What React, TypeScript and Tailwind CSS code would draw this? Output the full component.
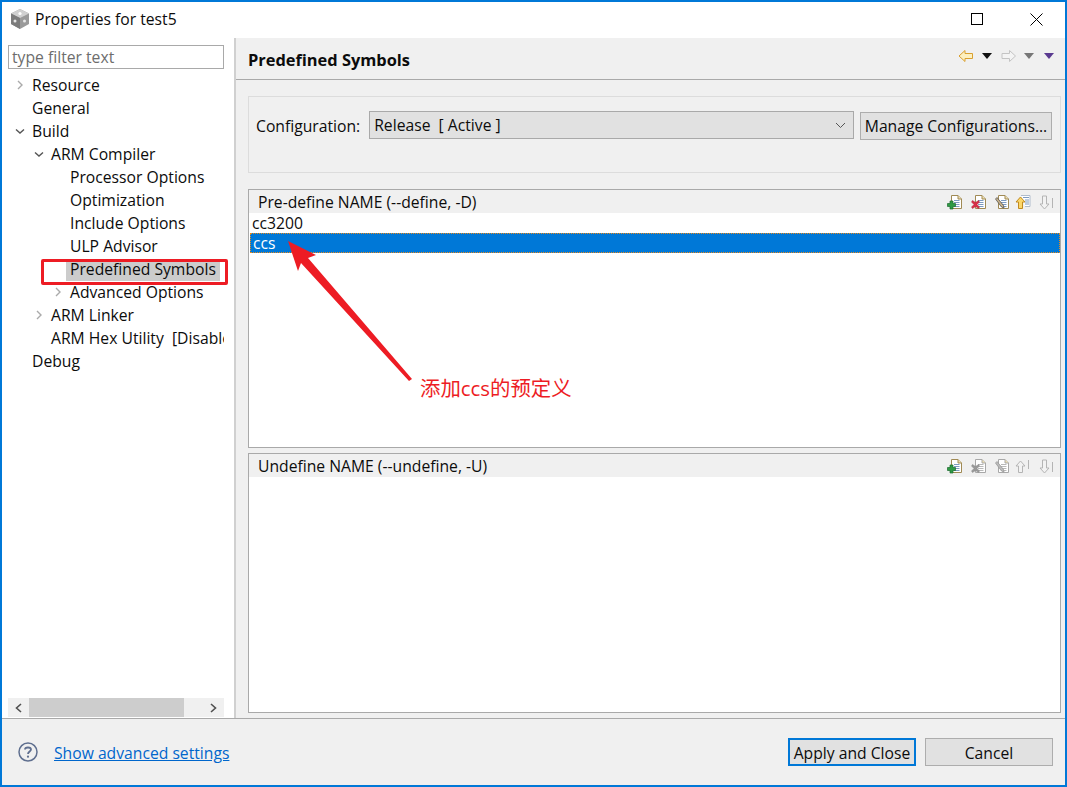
import React from 'react';

const FONT = { fontFamily: '"Open Sans", "Noto Sans", "Noto Sans CJK SC", sans-serif' };

type TreeItem = { label: string; level: number; arrow?: 'open' | 'closed'; selected?: boolean };

const treeItems: TreeItem[] = [
  { label: 'Resource', level: 0, arrow: 'closed' },
  { label: 'General', level: 0 },
  { label: 'Build', level: 0, arrow: 'open' },
  { label: 'ARM Compiler', level: 1, arrow: 'open' },
  { label: 'Processor Options', level: 2 },
  { label: 'Optimization', level: 2 },
  { label: 'Include Options', level: 2 },
  { label: 'ULP Advisor', level: 2 },
  { label: 'Predefined Symbols', level: 2, selected: true },
  { label: 'Advanced Options', level: 2, arrow: 'closed' },
  { label: 'ARM Linker', level: 1, arrow: 'closed' },
  { label: 'ARM Hex Utility  [Disabled]', level: 1 },
  { label: 'Debug', level: 0 },
];

function TreeArrow({ kind }: { kind: 'open' | 'closed' }) {
  return (
    <svg width="10" height="10" viewBox="0 0 10 10" fill="none" strokeWidth="1.4">
      {kind === 'open' ? (
        <path d="M1 3.5 L5 7 L9 3.5" stroke="#555" />
      ) : (
        <path d="M3 1 L7 5 L3 9" stroke="#aaa" />
      )}
    </svg>
  );
}

function Tree() {
  return (
    <div className="flex flex-col overflow-hidden">
      {treeItems.map((item) => (
        <div key={item.label} className={`flex h-[23px] items-center ${item.level === 0 ? 'pl-[26px]' : item.level === 1 ? 'pl-[45px]' : 'pl-[64px]'} relative whitespace-pre`}>
          {item.arrow && (
            <span className={`absolute top-[6px] ${item.level === 0 ? 'left-[13px]' : item.level === 1 ? 'left-[32px]' : 'left-[51px]'}`}>
              <TreeArrow kind={item.arrow} />
            </span>
          )}
          <span className={`px-[4px] pb-[2px] leading-[20px] ${item.selected ? 'bg-[#cccccc]' : ''}`}>{item.label}</span>
        </div>
      ))}
    </div>
  );
}

function HeaderArrow({ dir, active }: { dir: 'left' | 'right'; active: boolean }) {
  const d = dir === 'left' ? 'M1 7 L7 1.5 V4.5 H14.5 V9.5 H7 V12.5 Z' : 'M14.5 7 L8.5 1.5 V4.5 H1 V9.5 H8.5 V12.5 Z';
  return (
    <svg width="16" height="14" viewBox="0 0 16 14">
      <path d={d} fill={active ? '#fdf0c0' : '#f4f4f4'} stroke={active ? '#d9a030' : '#c4c4c4'} />
    </svg>
  );
}

function Caret({ color }: { color: string }) {
  return (
    <svg width="10" height="6" viewBox="0 0 10 6">
      <path d="M0 0 H10 L5 6 Z" fill={color} />
    </svg>
  );
}

function DocIcon({ kind, enabled }: { kind: 'add' | 'del' | 'edit'; enabled: boolean }) {
  const border = enabled ? '#a08a55' : '#a8a8a8';
  const line = enabled ? '#7d9ac0' : '#b8b8b8';
  return (
    <svg width="16" height="16" viewBox="0 0 16 16">
      <path d="M4.5 1.5 H11 L14.5 5 V14.5 H4.5 Z" fill="#fff" stroke={border} />
      <path d="M11 1.5 V5 H14.5" fill="#f0e0b0" stroke={border} />
      <path d="M7 6.5 H12.5 M7 8.5 H12.5 M7 10.5 H12.5 M7 12.5 H12.5" stroke={line} />
      {kind === 'add' && (
        <path d="M3 7 H6 V9.5 H8.5 V12.5 H6 V15 H3 V12.5 H0.5 V9.5 H3 Z" fill={enabled ? '#2f9a45' : '#999'} stroke={enabled ? '#1a6a2c' : '#888'} strokeWidth="0.7" />
      )}
      {kind === 'del' && (
        <path d="M1.5 6.5 L4.5 8.5 L7.5 6.5 L8.5 8 L6 10.5 L8.5 13 L7.5 14.5 L4.5 12.5 L1.5 14.5 L0.5 13 L3 10.5 L0.5 8 Z" fill={enabled ? '#d83048' : '#999'} stroke={enabled ? '#b02038' : '#888'} strokeWidth="0.5" />
      )}
      {kind === 'edit' && (
        <path d="M1.5 5 L3 3.5 L9.5 11.5 L10 14 L7.5 13 Z" fill={enabled ? '#c9b28a' : '#bbb'} stroke={enabled ? '#555' : '#999'} strokeWidth="0.8" />
      )}
    </svg>
  );
}

function UpIcon({ enabled }: { enabled: boolean }) {
  return (
    <svg width="16" height="16" viewBox="0 0 16 16">
      {enabled && <path d="M6 1.5 H15 V12.5 H10" fill="#fff" stroke="#b0bccc" />}
      {enabled && <path d="M8 3.5 H14 M10 6 H14 M10 8 H14 M10 10 H14" stroke="#7d9ac0" />}
      <path d="M5.5 3 L10 8 H7.5 V14.5 H3.5 V8 H1 Z" fill={enabled ? '#fcd76a' : '#f2f2f2'} stroke={enabled ? '#c08a20' : '#b4b4b4'} />
      {!enabled && <path d="M13.5 2 V11" stroke="#b4b4b4" />}
    </svg>
  );
}

function DownIcon() {
  return (
    <svg width="16" height="16" viewBox="0 0 16 16">
      <path d="M5.5 15 L10 10 H7.5 V2 H3.5 V10 H1 Z" fill="#f2f2f2" stroke="#b4b4b4" />
      <path d="M13.5 4 V14" stroke="#b4b4b4" />
    </svg>
  );
}

function SymbolPanel({ title, grow, children, enabled }: { title: string; grow: string; children?: React.ReactNode; enabled: boolean }) {
  return (
    <div className={`flex flex-col border border-[#a9a9a9] bg-white ${grow}`}>
      <div className="flex h-[23px] shrink-0 items-center justify-between bg-[#f0f0f0] pl-[9px] pr-[5px]">
        <span className="mt-[3px]">{title}</span>
        <div className="flex items-center">
          <span className="mr-[8px]"><DocIcon kind="add" enabled /></span>
          <span className="mr-[7px]"><DocIcon kind="del" enabled={enabled} /></span>
          <span className="mr-[5px]"><DocIcon kind="edit" enabled={enabled} /></span>
          <span className="mr-[8px]"><UpIcon enabled={enabled} /></span>
          <DownIcon />
        </div>
      </div>
      {children}
    </div>
  );
}

export default function App() {
  return (
    <div className="relative flex h-[787px] w-[1067px] flex-col overflow-hidden border-2 border-[#0078d7] bg-white text-[15.7px] text-[#0c0c0c]" style={FONT}>
      {/* Title bar */}
      <div className="flex h-[36px] shrink-0 items-center pb-[2px] pl-[7px]">
        <svg width="22" height="22" viewBox="0 0 22 22">
          <path d="M11 1 L20 5.5 V16 L11 21 L2 16 V5.5 Z" fill="#9a9a9a" />
          <path d="M11 1 L20 5.5 L11 10 L2 5.5 Z" fill="#d0d0d0" />
          <path d="M2 5.5 L11 10 V21 L2 16 Z" fill="#7c7c7c" />
          <circle cx="11" cy="5.5" r="1.6" fill="#fff" />
          <circle cx="6" cy="13" r="1.5" fill="#e6e6e6" />
          <circle cx="15.5" cy="13" r="1.5" fill="#e6e6e6" />
        </svg>
        <span className="ml-[4px] mt-[2px]">Properties for test5</span>
        <div className="ml-auto flex items-center">
          <svg className="mr-[47px]" width="12" height="12" viewBox="0 0 12 12" fill="none" stroke="#000">
            <rect x="0.5" y="0.5" width="11" height="11" />
          </svg>
          <svg className="mr-[22px]" width="13" height="13" viewBox="0 0 13 13" fill="none" stroke="#000">
            <path d="M0.5 0.5 L12.5 12.5 M12.5 0.5 L0.5 12.5" />
          </svg>
        </div>
      </div>

      {/* Main area */}
      <div className="flex min-h-0 flex-1">
        <div className="flex w-[232px] shrink-0 flex-col bg-white">
          <div className="mx-[6px] mt-[7px] flex h-[24px] w-[216px] shrink-0 items-center border border-[#a9a9a9] pl-[3px] pt-[2px] text-[#6d6d6d]">type filter text</div>
          <div className="mt-[5px] min-h-0 w-[222px] flex-1 overflow-hidden">
            <Tree />
          </div>
          <div className="mx-[6px] mb-[1px] flex h-[19px] w-[216px] shrink-0 items-center bg-[#f0f0f0]">
            <svg className="ml-[6px] shrink-0" width="9" height="10" viewBox="0 0 9 10" fill="none" stroke="#505050" strokeWidth="1.6"><path d="M7 1 L2.5 5 L7 9" /></svg>
            <div className="ml-[6px] h-full w-[155px] shrink-0 bg-[#cdcdcd]" />
            <svg className="ml-auto mr-[6px] shrink-0" width="9" height="10" viewBox="0 0 9 10" fill="none" stroke="#505050" strokeWidth="1.6"><path d="M2 1 L6.5 5 L2 9" /></svg>
          </div>
        </div>

        <div className="flex min-w-0 flex-1 flex-col border-l-2 border-[#d0d0d0] bg-[#f0f0f0]">
          <div className="flex h-[42px] shrink-0 items-center justify-between border-b border-[#a9a9a9] pl-[12px] pr-[11px]">
            <span className="mt-[4px] text-[16.4px] font-bold">Predefined Symbols</span>
            <div className="mt-[-6px] flex items-center">
              <HeaderArrow dir="left" active />
              <span className="ml-[8px]"><Caret color="#111" /></span>
              <span className="ml-[9px]"><HeaderArrow dir="right" active={false} /></span>
              <span className="ml-[7px]"><Caret color="#777" /></span>
              <span className="ml-[10px]"><Caret color="#5a3a90" /></span>
            </div>
          </div>

          <div className="flex min-h-0 flex-1 flex-col pb-[5px] pl-[12px] pr-[4px] pt-[16px]">
            <div className="flex h-[77px] shrink-0 items-start border border-[#dcdcdc] pl-[7px] pr-[8px] pt-[14px]">
              <span className="mt-[4px]">Configuration:</span>
              <div className="ml-[9px] flex h-[28px] w-[485px] items-center justify-between whitespace-pre border border-[#a9a9a9] bg-[#e1e1e1] pl-[4px] pr-[7px]">
                <span className="mt-[2px]">Release  [ Active ]</span>
                <svg width="11" height="7" viewBox="0 0 11 7" fill="none" stroke="#555"><path d="M1 1 L5.5 5.5 L10 1" /></svg>
              </div>
              <div className="ml-[6px] mt-[1px] flex h-[28px] w-[192px] items-center justify-center whitespace-nowrap border border-[#adadad] bg-[#e1e1e1] pt-[2px]">Manage Configurations...</div>
            </div>

            <div className="mt-[16px] flex min-h-0 flex-1 flex-col gap-[5px]">
              <SymbolPanel title="Pre-define NAME (--define, -D)" grow="h-[259px] shrink-0" enabled>
                <div className="flex h-[20px] items-center pl-[3px] pt-[2px]">cc3200</div>
                <div className="ml-[1px] flex h-[20px] items-center border border-dotted border-[#e8891c] bg-[#0078d7] pl-[2px] pt-[2px] text-white">ccs</div>
              </SymbolPanel>
              <SymbolPanel title="Undefine NAME (--undefine, -U)" grow="min-h-0 flex-1" enabled={false} />
            </div>
          </div>
        </div>
      </div>

      {/* Bottom bar */}
      <div className="flex h-[67px] shrink-0 items-center border-t border-[#a9a9a9] bg-[#f0f0f0] pl-[16px]">
        <svg width="20" height="20" viewBox="0 0 20 20" fill="none">
          <circle cx="10" cy="10" r="9" stroke="#5f6f8f" strokeWidth="1.5" />
          <path d="M7 7.5 C7 4.8 13 4.8 13 7.5 C13 9.5 10 9.5 10 12" stroke="#5f6f8f" strokeWidth="1.8" />
          <circle cx="10" cy="14.7" r="1.1" fill="#5f6f8f" />
        </svg>
        <span className="ml-[16px] mt-[3px] text-[#0066cc] underline">Show advanced settings</span>
        <div className="ml-auto mr-[12px] flex items-center gap-[9px]">
          <div className="flex h-[28px] w-[128px] items-center justify-center whitespace-nowrap border-2 border-[#0078d7] bg-[#e1e1e1] pt-[4px]">Apply and Close</div>
          <div className="flex h-[28px] w-[128px] items-center justify-center border border-[#adadad] bg-[#e1e1e1] pt-[4px]">Cancel</div>
        </div>
      </div>

      {/* Annotations over the screenshot */}
      <div className="pointer-events-none absolute left-[39px] top-[257px] h-[26px] w-[187px] rounded-[2px] border-[3px] border-[#ed1c24]" />
      <svg className="pointer-events-none absolute left-[-2px] top-[-2px]" width="1067" height="787">
        <polygon points="288,241 316,255 308,258 412,379 409,381 301,263 298,271" fill="#ed1c24" />
      </svg>
      <span className="absolute left-[418px] top-[371px] text-[20.4px] leading-[30px] text-[#ed1c24]">添加ccs的预定义</span>
    </div>
  );
}
